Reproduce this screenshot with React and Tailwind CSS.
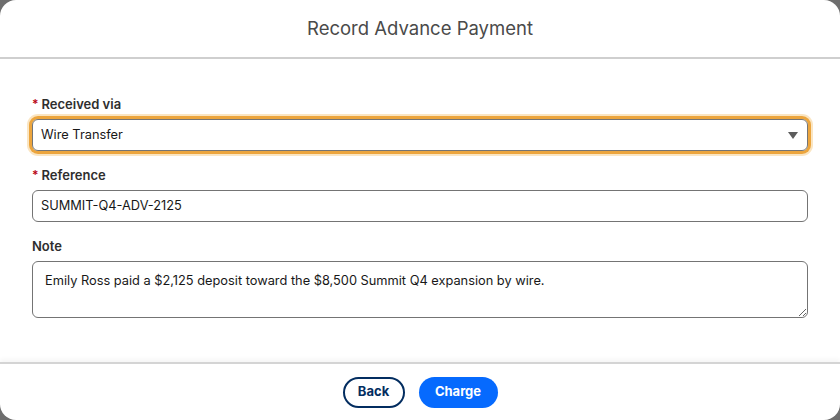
const FONT = { fontFamily: 'Inter, "Noto Sans", "Liberation Sans", sans-serif' }

function Label({ required, children }) {
  return (
    <div className="flex items-center h-[18px] mb-[5px] text-[13px] font-semibold text-[#2e2e2e]">
      {required && <span className="text-[#ba0517] text-[12px] mr-[3px] -mt-[3px]">*</span>}
      {children}
    </div>
  )
}

export default function App() {
  return (
    <div className="w-[840px] h-[420px] bg-[#6e6e6e]" style={FONT}>
      <div className="w-full h-full bg-white rounded-[16px] flex flex-col overflow-hidden">
        {/* Header */}
        <div className="h-[59px] shrink-0 flex items-center justify-center border-b-2 border-[#cfcfcf]">
          <h2 className="text-[18.5px] text-[#4a4a4a] mt-[1px]">Record Advance Payment</h2>
        </div>

        {/* Body */}
        <div className="flex-1 px-8 pt-[37px]">
          <Label required>Received via</Label>
          <div className="h-[32px] rounded-[6px] border border-[#747474] shadow-[0_0_0_3px_#eca53d,0_0_0_5px_#fae5c2] flex items-center justify-between pl-2 pr-[9px] text-[12.8px] text-[#181818]">
            <span>Wire Transfer</span>
            <span className="w-0 h-0 border-l-[5.5px] border-r-[5.5px] border-t-[7px] border-l-transparent border-r-transparent border-t-[#5c5c5c]" />
          </div>

          <div className="mt-[16px]">
            <Label required>Reference</Label>
            <div className="h-[32px] rounded-[6px] border border-[#747474] flex items-center px-2 text-[12.8px] text-[#181818]">
              SUMMIT-Q4-ADV-2125
            </div>
          </div>

          <div className="mt-[16px]">
            <Label>Note</Label>
            <textarea
              readOnly
              defaultValue="Emily Ross paid a $2,125 deposit toward the $8,500 Summit Q4 expansion by wire."
              className="block w-full h-[57px] rounded-[6px] border border-[#747474] px-3 pt-[9px] text-[12.8px] text-[#181818] outline-none"
              style={FONT}
            />
          </div>
        </div>

        {/* Footer */}
        <div className="h-[58px] shrink-0 border-t-2 border-[#d4d4d4] shadow-[0_-3px_4px_rgba(0,0,0,0.04)] flex items-center justify-center gap-[14px]">
          <button className="h-[31px] w-[62px] rounded-full border-2 border-[#032d60] text-[#032d60] text-[13px] font-bold">
            Back
          </button>
          <button className="h-[31px] w-[79px] rounded-full bg-[#066afe] text-white text-[13px] font-bold">
            Charge
          </button>
        </div>
      </div>
    </div>
  )
}
